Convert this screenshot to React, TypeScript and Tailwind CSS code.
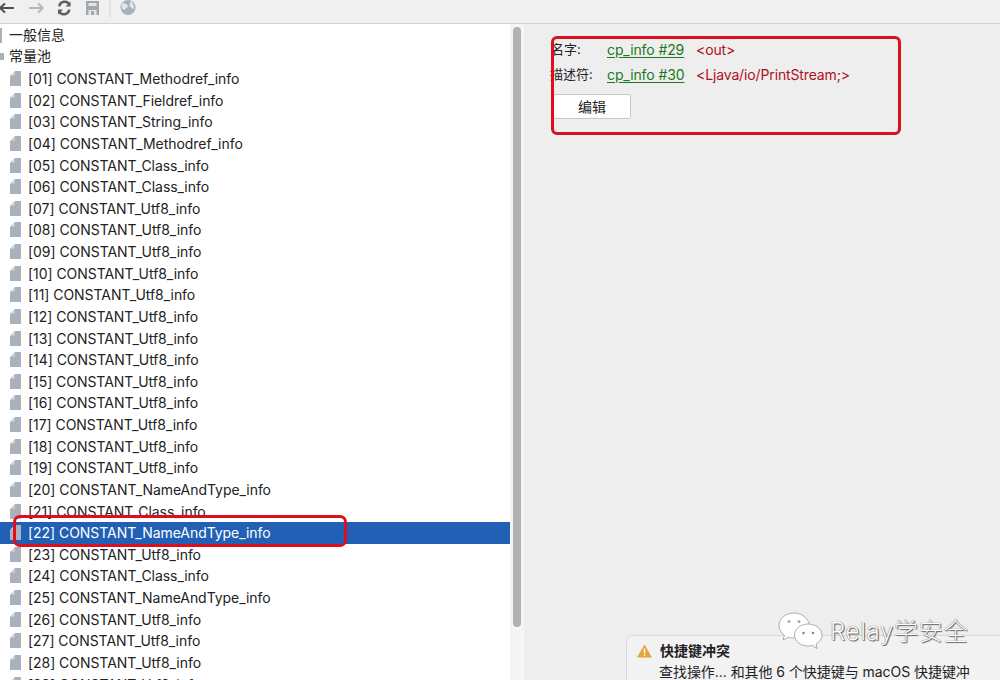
import React from 'react';

const font = "font-['Inter','Noto_Sans_CJK_SC',sans-serif]";

const rows = [
  '[01] CONSTANT_Methodref_info',
  '[02] CONSTANT_Fieldref_info',
  '[03] CONSTANT_String_info',
  '[04] CONSTANT_Methodref_info',
  '[05] CONSTANT_Class_info',
  '[06] CONSTANT_Class_info',
  '[07] CONSTANT_Utf8_info',
  '[08] CONSTANT_Utf8_info',
  '[09] CONSTANT_Utf8_info',
  '[10] CONSTANT_Utf8_info',
  '[11] CONSTANT_Utf8_info',
  '[12] CONSTANT_Utf8_info',
  '[13] CONSTANT_Utf8_info',
  '[14] CONSTANT_Utf8_info',
  '[15] CONSTANT_Utf8_info',
  '[16] CONSTANT_Utf8_info',
  '[17] CONSTANT_Utf8_info',
  '[18] CONSTANT_Utf8_info',
  '[19] CONSTANT_Utf8_info',
  '[20] CONSTANT_NameAndType_info',
  '[21] CONSTANT_Class_info',
  '[22] CONSTANT_NameAndType_info',
  '[23] CONSTANT_Utf8_info',
  '[24] CONSTANT_Class_info',
  '[25] CONSTANT_NameAndType_info',
  '[26] CONSTANT_Utf8_info',
  '[27] CONSTANT_Utf8_info',
  '[28] CONSTANT_Utf8_info',
  '[29] CONSTANT_Utf8_info',
];

const FileIcon = () => (
  <svg width="11" height="15" viewBox="0 0 11 15" className="shrink-0">
    <path d="M5 0H11V15H0V5Z" fill="#a9b2ba" />
    <path d="M4.500 0.500V4.500H0.500Z" fill="#d5dade" />
  </svg>
);

const Toolbar = () => (
  <div className="h-6 shrink-0 flex items-center bg-[#f0f0f0] border-b border-[#d2d2d2] overflow-hidden">
    <svg width="140" height="23" viewBox="0 0 140 23" fill="none">
      <path d="M0 8H14M0 8L5 3.500M0 8L5 12.500" stroke="#4c4f52" strokeWidth="2" />
      <path d="M29 8H43M43 8L38 3.500M43 8L38 12.500" stroke="#b5b8ba" strokeWidth="2" />
      <path d="M69.500 4.800A5.400 5.400 0 0 0 59.300 6.400M59 11.200A5.400 5.400 0 0 0 69.200 9.600" stroke="#5c6063" strokeWidth="2.600" />
      <path d="M70.500 1.500V6.500H65.500ZM58 14.500V9.500H63Z" fill="#5c6063" />
      <path d="M86 1H99V15H86Z" fill="#a3a8ac" />
      <path d="M88.500 3H96.500V6H88.500ZM88.500 10H96.500V15H88.500Z" fill="#e4e6e8" />
      <path d="M91 11H94V15H91Z" fill="#a3a8ac" />
      <path d="M110 0V17" stroke="#d0d0d0" strokeWidth="1" />
      <circle cx="128" cy="7.500" r="7.500" fill="#a9b0b6" />
      <path d="M122 3C125 3 127 4 128 6C128 8 125 8 124.500 10C123 10 121.500 8 121.500 6ZM131 1C133 3 134 5 134 9C132 9 131 7 129.500 6C129.500 4 130 2 131 1Z" fill="#e3e6e8" />
    </svg>
  </div>
);

const Tree = () => (
  <div className="w-[510px] shrink-0 bg-white overflow-hidden text-[14px] text-[#222] pt-[0.5px]">
    <div className="h-[21.63px] flex items-center relative pl-[9px] pb-[2px]">
      <span className="absolute left-0 top-[3px] w-[2px] h-[15px] bg-[#a9b2ba]" />
      一般信息
    </div>
    <div className="h-[21.63px] flex items-center relative pl-[9px] pb-[2px]">
      <span className="absolute left-0 top-[7px] w-[4px] h-[7px] bg-[#a9b2ba]" />
      常量池
    </div>
    {rows.map((name) => {
      const selected = name.startsWith('[22]');
      return (
        <div
          key={name}
          className={`h-[21.63px] flex items-center gap-[7px] pl-[10px] whitespace-nowrap ${selected ? 'bg-[#2160b4] text-white' : ''}`}
        >
          <FileIcon />
          <span className="tracking-[-0.05px]">{name}</span>
        </div>
      );
    })}
  </div>
);

const Scrollbar = () => (
  <div className="w-[14px] shrink-0 bg-[#f5f5f5] pt-[3px] pl-[3px]">
    <div className="w-2 h-[600px] rounded-full bg-[#b1b1b1]" />
  </div>
);

const Detail = () => (
  <div className="flex-1 bg-[#eeeeee] pl-[27px] pt-[14px] text-[13px] text-[#222]">
    <div className="flex items-center h-[22px]">
      <span className="w-[56px] pt-[2px]">名字:</span>
      <a className="w-[89px] text-[14px] tracking-[-0.1px] text-[#1a7a1a] underline underline-offset-2">cp_info #29</a>
      <span className="text-[14px] tracking-[-0.13px] text-[#b00e23]">&lt;out&gt;</span>
    </div>
    <div className="flex items-center h-[22px] mt-[3px] -ml-[1px]">
      <span className="w-[57px] whitespace-nowrap pt-[2px]">描述符:</span>
      <a className="w-[89px] text-[14px] tracking-[-0.1px] text-[#1a7a1a] underline underline-offset-2">cp_info #30</a>
      <span className="text-[14px] tracking-[-0.13px] text-[#b00e23]">&lt;Ljava/io/PrintStream;&gt;</span>
    </div>
    <button className="mt-[9px] ml-[2px] w-[78px] h-[25px] bg-white border border-[#c8c8c8] rounded-[3px] text-[14px] flex items-center justify-center">
      编辑
    </button>
  </div>
);

const Toast = () => (
  <div className="absolute left-[626px] top-[635px] w-[380px] h-[50px] bg-[#f2f2f2] border border-[#d8d8d8] rounded-tl-[6px] pl-[10px] pt-[5px] text-[14px] text-[#222]">
    <div className="flex items-center gap-[8px] h-[19px]">
      <svg width="15" height="14" viewBox="0 0 15 14">
        <path d="M7.500 0.500L15 13.500H0Z" fill="#e8a33a" />
        <path d="M6.800 4.500H8.200V9.500H6.800ZM6.800 10.500H8.200V12H6.800Z" fill="#fff" />
      </svg>
      <span className="font-semibold">快捷键冲突</span>
    </div>
    <div className="pl-[22px] mt-[1px] whitespace-nowrap tracking-[-0.05px]">查找操作... 和其他 6 个快捷键与 macOS 快捷键冲</div>
  </div>
);

const Watermark = () => (
  <div className="absolute left-[778px] top-[612px] flex items-center gap-[7px] text-white">
    <svg width="45" height="40" viewBox="0 0 45 40">
      <path d="M16 1C7.500 1 1 6.500 1 13.500C1 17.500 3.200 21 6.500 23.200L5 28L10.500 25.200C12 25.700 13.500 26 15.500 26C20 26 32 20 31 11C28.500 5 23 1 16 1Z" fill="#fff" stroke="#999" strokeWidth="0.8" />
      <path d="M30 12C22.500 12 16.500 16.800 16.500 23C16.500 29.200 22.500 34 30 34C31.500 34 33 33.800 34.300 33.400L39 36.500L38 32C41.700 29.800 44 26.700 44 23C44 16.800 37.500 12 30 12Z" fill="#fff" stroke="#999" strokeWidth="0.8" />
      <circle cx="11" cy="9.500" r="1.500" fill="#aaa" />
      <circle cx="21" cy="9.500" r="1.500" fill="#aaa" />
      <circle cx="25.500" cy="21" r="1.300" fill="#888" />
      <circle cx="35" cy="21" r="1.300" fill="#888" />
    </svg>
    <span className="text-[24px] font-light tracking-[0.7px] whitespace-nowrap [text-shadow:0_0_1px_#333,1px_1px_1px_#666]">Relay学安全</span>
  </div>
);

const App: React.FC = () => {
  return (
    <div className={`relative w-[1000px] h-[680px] overflow-hidden flex flex-col ${font}`}>
      <Toolbar />
      <div className="flex flex-1 min-h-0">
        <Tree />
        <Scrollbar />
        <Detail />
      </div>

      {/* red annotations on top of the screenshot */}
      <div className="absolute left-[551px] top-[36px] w-[350px] h-[99px] border-[3px] border-[#dc0f1e] rounded-[6px]" />
      <div className="absolute left-[13px] top-[515px] w-[334px] h-[32px] border-[3px] border-[#dc0f1e] rounded-[7px]" />

      <Toast />
      <Watermark />
    </div>
  );
};

export default App;
